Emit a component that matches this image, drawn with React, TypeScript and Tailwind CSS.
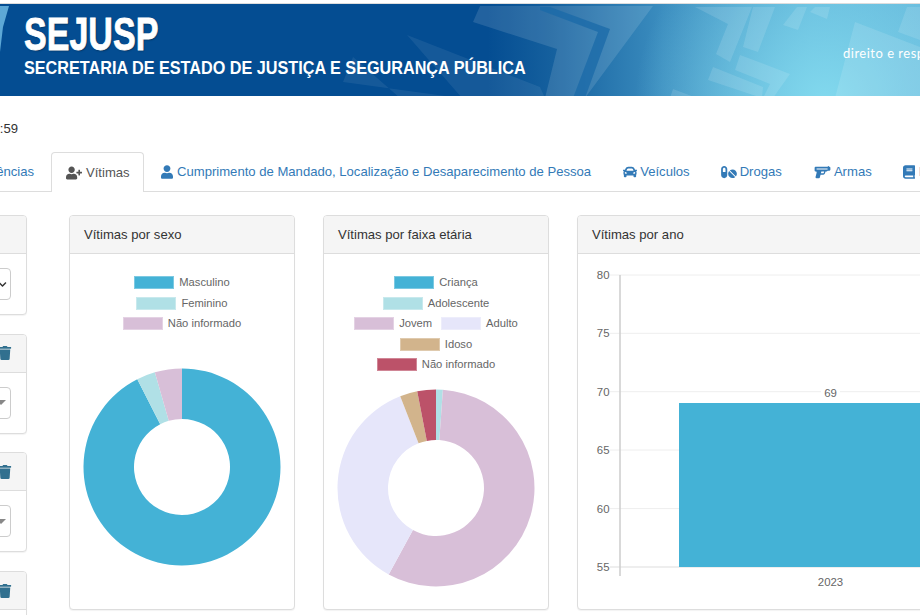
import { FaBook, FaCar, FaChevronDown, FaPills, FaTrash, FaUser, FaUserPlus } from "react-icons/fa";
import { FaGun } from "react-icons/fa6";

type Slice = { from: number; to: number; color: string };
type LegendItem = { label: string; color: string };

const sexSlices: Slice[] = [
  { from: 0, to: 333, color: "#44b2d6" },
  { from: 333, to: 344, color: "#b0e0e6" },
  { from: 344, to: 360, color: "#d8bfd8" },
];

const ageSlices: Slice[] = [
  { from: 0, to: 4, color: "#b0e0e6" },
  { from: 4, to: 208.7, color: "#d8bfd8" },
  { from: 208.7, to: 338.7, color: "#e6e6fa" },
  { from: 338.7, to: 349, color: "#d2b48c" },
  { from: 349, to: 360, color: "#bc5269" },
];

const sexLegend: LegendItem[][] = [
  [{ label: "Masculino", color: "#44b2d6" }],
  [{ label: "Feminino", color: "#b0e0e6" }],
  [{ label: "Não informado", color: "#d8bfd8" }],
];

const ageLegend: LegendItem[][] = [
  [{ label: "Criança", color: "#44b2d6" }],
  [{ label: "Adolescente", color: "#b0e0e6" }],
  [
    { label: "Jovem", color: "#d8bfd8" },
    { label: "Adulto", color: "#e6e6fa" },
  ],
  [{ label: "Idoso", color: "#d2b48c" }],
  [{ label: "Não informado", color: "#bc5269" }],
];

const ticks = [
  { label: "80", y: 275 },
  { label: "75", y: 333.3 },
  { label: "70", y: 391.7 },
  { label: "65", y: 450 },
  { label: "60", y: 508.6 },
  { label: "55", y: 567 },
];

const faintShapes = ["407,33 540,85 545,96 462,96", "353,55 343,80 460,96 400,96"];

const lightShapes = [
  "473,20 480,4 653,4 585,96 545,96 557,47",
  "695,5 752,5 730,60 716,52 728,22",
  "753,5 775,5 758,50 743,45",
  "783,23 797,5 807,5 798,28",
  "810,10 815,5 830,5 827,17",
  "855,20 920,45 920,96 835,96",
  "898,30 907,5 920,5 920,38",
  "740,53 790,72 773,96 763,96 770,82 735,68",
  "713,65 763,85 762,96 708,78",
  "673,87 697,96 670,96",
];

function arcPath(from: number, to: number, r: number, inner: number) {
  const point = (angle: number, radius: number) => {
    const rad = ((angle - 90) * Math.PI) / 180;
    return `${100 + radius * Math.cos(rad)} ${100 + radius * Math.sin(rad)}`;
  };
  const large = to - from > 180 ? 1 : 0;
  return `M ${point(from, r)} A ${r} ${r} 0 ${large} 1 ${point(to, r)} L ${point(to, inner)} A ${inner} ${inner} 0 ${large} 0 ${point(from, inner)} Z`;
}

function Donut({ slices }: { slices: Slice[] }) {
  return (
    <svg width="200" height="200" viewBox="0 0 200 200" className="block">
      {slices.map((s) => (
        <path key={s.from} d={arcPath(s.from, s.to, 98.5, 48)} fill={s.color} />
      ))}
    </svg>
  );
}

function Legend({ rows }: { rows: LegendItem[][] }) {
  return (
    <div className="flex flex-col items-center">
      {rows.map((row) => (
        <div key={row[0].label} className="flex h-[20.5px] items-start gap-[9px]">
          {row.map((item) => (
            <div key={item.label} className="flex items-start gap-[5px] text-[11.2px] leading-[12px] text-[#666]">
              <span className="h-[13px] w-[40px] border border-white/30" style={{ background: item.color }} />
              <span>{item.label}</span>
            </div>
          ))}
        </div>
      ))}
    </div>
  );
}

function ChartPanel({ title, children, width }: { title: string; children: React.ReactNode; width: string }) {
  return (
    <div className={`${width} h-[395px] shrink-0 overflow-hidden rounded border border-[#ddd] bg-white shadow-[0_1px_1px_rgba(0,0,0,0.05)]`}>
      <div className="flex h-[38px] items-center border-b border-[#ddd] bg-[#f5f5f5] px-[14px] pt-[1px] text-[13.1px] text-[#333]">
        {title}
      </div>
      {children}
    </div>
  );
}

function SidePanel({ trash, first }: { trash?: boolean; first?: boolean }) {
  return (
    <div className="h-[100px] w-[77px] shrink-0 overflow-hidden rounded border border-[#ddd] bg-white shadow-[0_1px_1px_rgba(0,0,0,0.05)]">
      <div className="flex h-[38px] items-center justify-end border-b border-[#ddd] bg-[#f5f5f5] pr-[14px]">
        {trash && <FaTrash size={14} className="text-[#31708f]" />}
      </div>
      <div className="px-[15px] pt-[14px]">
        <div className="flex h-[32px] items-center justify-end rounded border border-[#ccc] bg-white pr-[3px]">
          {first ? (
            <FaChevronDown size={9} className="text-[#333]" />
          ) : (
            <span className="mr-[1px] h-0 w-0 border-x-[5px] border-t-[5px] border-x-transparent border-t-[#888]" />
          )}
        </div>
      </div>
    </div>
  );
}

function Tab({ icon, label, gap = "gap-[4px]" }: { icon: React.ReactNode; label: string; gap?: string }) {
  return (
    <div className={`flex h-[39px] shrink-0 items-center ${gap} whitespace-nowrap px-[15px] pt-[1px] text-[13.1px] text-[#337ab7]`}>
      {icon}
      <span>{label}</span>
    </div>
  );
}

function Banner() {
  return (
    <div className="relative h-[92px] w-[920px] overflow-hidden">
      <svg width="920" height="96" viewBox="0 4 920 92" className="absolute inset-0 block">
        <defs>
          <linearGradient id="base" x1="0" x2="1" y1="0" y2="0">
            <stop offset="0" stopColor="#044d92" />
            <stop offset="0.53" stopColor="#044d92" />
            <stop offset="0.6" stopColor="#15609e" />
            <stop offset="0.72" stopColor="#3b8dbf" />
            <stop offset="0.88" stopColor="#5cb0d6" />
            <stop offset="1" stopColor="#62b4d9" />
          </linearGradient>
          <radialGradient id="glow" gradientUnits="userSpaceOnUse" cx="825" cy="100" r="190">
            <stop offset="0" stopColor="#82d9ee" stopOpacity="1" />
            <stop offset="1" stopColor="#82d9ee" stopOpacity="0" />
          </radialGradient>
        </defs>
        <rect x="0" y="0" width="920" height="100" fill="url(#base)" />
        <rect x="0" y="0" width="920" height="100" fill="url(#glow)" />
        {faintShapes.map((points) => (
          <polygon key={points} points={points} fill="#fff" fillOpacity={0.07} />
        ))}
        {lightShapes.map((points) => (
          <polygon key={points} points={points} fill="#fff" fillOpacity={0.12} />
        ))}
        <polygon points="540,5 550,5 610,27 585,96 573,96 598,30 540,8" fill="#1a6aa8" fillOpacity="0.75" />
        <polygon points="0,4 9,4 3,25 0,50" fill="#5da8d6" />
      </svg>
      <div className="relative flex flex-col pl-[24px] pt-[8px] text-white">
        <div className="h-[44px] origin-left scale-x-[0.74] whitespace-nowrap text-[46px] font-bold leading-[44px] [-webkit-text-stroke:0.8px_white] [text-shadow:1px_1px_2px_rgba(0,0,0,0.45)]">
          SEJUSP
        </div>
        <div className="mt-[2px] origin-left scale-x-[0.9] whitespace-nowrap text-[18px] font-bold leading-[20px]">
          SECRETARIA DE ESTADO DE JUSTIÇA E SEGURANÇA PÚBLICA
        </div>
      </div>
      <div className="absolute left-[843px] top-[40px] whitespace-nowrap font-['Lato',sans-serif] text-[13px] tracking-[0.5px] text-white">
        direito e respeito
      </div>
    </div>
  );
}

export default function App() {
  return (
    <div className="h-[615px] w-[920px] overflow-hidden bg-white font-['Liberation_Sans',Arial,sans-serif]">
      <div className="h-[4px] border-b border-[#ddd]" />
      <Banner />

      <div className="flex h-[56px] w-[18px] items-end justify-end whitespace-nowrap pb-[13px] text-[13.1px] leading-[20px] text-[#333]">
        12:59
      </div>

      <div className="flex h-[40px] border-b border-[#ddd]">
        <div className="flex h-[39px] w-[49px] shrink-0 items-center justify-end whitespace-nowrap pr-[15px] pt-[1px] text-[13.1px] text-[#337ab7]">
          Ocorrências
        </div>
        <div className="ml-[2px] flex h-[40px] w-[93px] shrink-0 items-center gap-[4px] rounded-t border border-b-0 border-[#ddd] bg-white pl-[14px] pt-[1px] text-[13.1px] text-[#555]">
          <FaUserPlus className="h-[14px] w-[16px]" />
          <span>Vítimas</span>
        </div>
        <div className="ml-[2px] flex">
          <Tab icon={<FaUser className="h-[14px] w-[12px]" />} label="Cumprimento de Mandado, Localização e Desaparecimento de Pessoa" />
          <div className="w-[2px]" />
          <Tab icon={<FaCar className="h-[14px] w-[14px]" />} label="Veículos" gap="gap-[3px]" />
          <div className="w-[1px]" />
          <Tab icon={<FaPills className="h-[14px] w-[16px]" />} label="Drogas" gap="gap-[3px]" />
          <div className="w-[2px]" />
          <Tab icon={<FaGun className="h-[14px] w-[17px]" />} label="Armas" gap="gap-[3px]" />
          <div className="w-[1px]" />
          <Tab icon={<FaBook className="h-[14px] w-[12px]" />} label="Dados" />
        </div>
      </div>

      <div className="mt-[23px] flex items-start">
        <div className="-ml-[50px] flex w-[77px] shrink-0 flex-col gap-[18.7px]">
          <SidePanel first />
          <SidePanel trash />
          <SidePanel trash />
          <SidePanel trash />
        </div>

        <div className="ml-[42px]">
          <ChartPanel title="Vítimas por sexo" width="w-[226px]">
            <div className="flex flex-col items-center pt-[22px]">
              <Legend rows={sexLegend} />
              <div className="mt-[29px]">
                <Donut slices={sexSlices} />
              </div>
            </div>
          </ChartPanel>
        </div>

        <div className="ml-[28px]">
          <ChartPanel title="Vítimas por faixa etária" width="w-[226px]">
            <div className="flex flex-col items-center pt-[22px]">
              <Legend rows={ageLegend} />
              <div className="mt-[9px]">
                <Donut slices={ageSlices} />
              </div>
            </div>
          </ChartPanel>
        </div>

        <div className="ml-[28px]">
          <ChartPanel title="Vítimas por ano" width="w-[520px]">
            <svg width="518" height="355" viewBox="578 254 518 355" className="block">
              {ticks.map((t) => (
                <g key={t.label}>
                  <line x1="610" x2="1090" y1={t.y} y2={t.y} stroke={t.label === "55" ? "#ddd" : "#eee"} />
                  <text x="609.5" y={t.y + 4} textAnchor="end" fontSize="11.4" fill="#666">
                    {t.label}
                  </text>
                </g>
              ))}
              <line x1="620" x2="620" y1="275" y2="576" stroke="#ccc" strokeWidth="1.5" />
              <rect x="679" y="403" width="303" height="164" fill="#44b2d6" />
              <rect x="821" y="386" width="19" height="14" fill="#fff" />
              <text x="830.5" y="396.5" textAnchor="middle" fontSize="11.4" fill="#666">
                69
              </text>
              <text x="830.5" y="586" textAnchor="middle" fontSize="11.4" fill="#666">
                2023
              </text>
            </svg>
          </ChartPanel>
        </div>
      </div>
    </div>
  );
}
